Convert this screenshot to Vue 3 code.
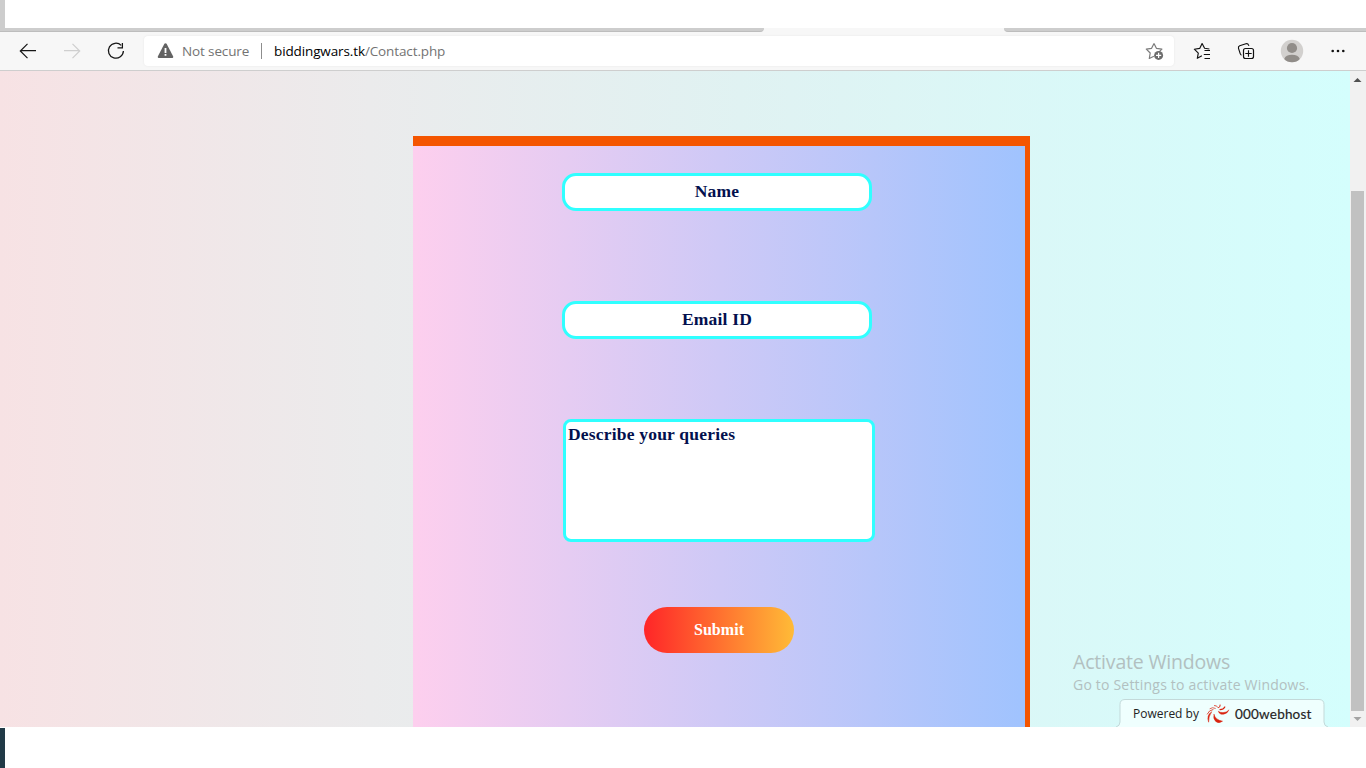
<script setup>
const fields = ['Name', 'Email ID']
</script>

<template>
  <div class="screen">
    <div class="topstrip"></div>
    <div class="tabs"><div class="tab left"></div><div class="tab right"></div></div>
    <header class="toolbar">
      <svg class="nav" width="144" height="38" viewBox="0 32 144 38" fill="none">
        <path d="M27.5 43.8 20.3 51l7.2 7.2M20.5 50.7H36" stroke="#161616" stroke-width="1.2" />
        <path d="m72.5 43.8 7.2 7.2-7.2 7.2M79.5 50.7H64" stroke="#cfcfcf" stroke-width="1.2" />
        <path d="M121.2 45.4A7.5 7.5 0 1 0 123.4 51M122.4 43v4.9h-4.9" stroke="#161616" stroke-width="1.25" />
      </svg>
      <div class="address">
        <svg class="warn" width="17" height="16" viewBox="0 0 17 16"><path d="M7.4.8Q8.5-.4 9.6.8L16.2 13.6Q16.5 15 15.3 15H1.7Q.5 15 .8 13.6Z" fill="#636363" /><path d="M7.6 5h1.8v5H7.6zM7.6 11h1.8v1.8H7.6z" fill="#fff" /></svg>
        <span class="secure">Not secure</span>
        <i class="bar"></i>
        <span class="url"><b>biddingwars.tk</b>/Contact.php</span>
      </div>
      <svg class="actions" width="236" height="38" viewBox="1130 32 236 38" fill="none" stroke-linejoin="round">
        <path d="m1154 43.5 2.4 4.8 5.5.8-3.8 3.8M1154 43.5l-2.4 4.8-5.3.8 3.9 3.9-.9 5.5 4.6-2.3" stroke="#7b7b7b" stroke-width="1.2" />
        <circle cx="1158.6" cy="55.4" r="4.5" fill="#6c6c6c" />
        <path d="M1156 55.4h5.2M1158.6 52.8V58" stroke="#fff" stroke-width="1.2" />
        <path d="m1209.4 49-4.8-.7-2.5-4.8-2.4 4.9-5.4.8 4 3.9-1 5.2 4.6-2.5M1204.5 50.5h5.500M1203.800 54.5h6.200M1204.500 58.5h5.500" stroke="#111" stroke-width="1.15" />
        <rect x="1243.5" y="48.5" width="10" height="10" rx="2" stroke="#111" stroke-width="1.2" />
        <path d="M1245.300 53.5h6.400M1248.500 50.300v6.400M1241.500 55.200q-1-.5-1.300-1.500l-1.700-5.400q-.5-1.800 1.200-2.500l6.200-2.100q2-.5 2.600 1.200l.4 1" stroke="#111" stroke-width="1.150" />
        <circle cx="1292" cy="51" r="11.2" fill="#d2d0ce" />
        <circle cx="1292" cy="48" r="5.1" fill="#918d89" />
        <path d="M1284.2 59q1.6-4.2 7.8-4.2t7.8 4.2q-3 3.200-7.800 3.200t-7.800-3.200Z" fill="#918d89" />
        <g fill="#111"><circle cx="1332.7" cy="51" r="1.3" /><circle cx="1338" cy="51" r="1.3" /><circle cx="1343.3" cy="51" r="1.3" /></g>
      </svg>
    </header>
    <main class="page">
      <form class="card">
        <div v-for="f in fields" :key="f" class="field"><span>{{ f }}</span></div>
        <div class="area"><span>Describe your queries</span></div>
        <div class="submit"><span>Submit</span></div>
      </form>
      <div class="scroll">
        <svg width="16" height="656" viewBox="0 0 16 656"><path d="m3.8 11-.3 0 4-4 4 4Z" fill="#505050" /><path fill="#c1c1c1" d="M1 120h13v520H1z" /><path d="m3.500 646 4 4 4-4Z" fill="#a3a3a3" /></svg>
      </div>
      <div class="activate"><div class="a1"><span>Activate Windows</span></div><div class="a2"><span>Go to Settings to activate Windows.</span></div></div>
      <div class="host">
        <svg class="plate" width="212" height="28" viewBox="0 0 212 28"><path d="M0 28q4-1 4-5V5.500q0-5 5-5h194q5 0 5 5V23q0 4 4 5" fill="#effffe" stroke="#c3d9d9" /></svg>
        <span class="powered">Powered by</span>
        <svg class="swirl" width="24" height="20" viewBox="0 0 24 20" fill="none" stroke="#d9230f" stroke-linecap="round">
          <path d="M22.800 6.200Q20.500 8.500 17 8.600 14 8.600 12.300 7.200 13.500 10.800 17.500 10.300 21.500 9.500 22.800 6.200Z" fill="#d9230f" stroke-width=".4" />
          <path d="M8 10.500Q9.500 16 16.500 17.200 13 20 9.800 17.500 7 14.800 8 10.500Z" fill="#d9230f" stroke-width=".5" />
          <path d="M5.500 8Q.2 11 2.600 18.200 2.400 12.500 5.500 8Z" fill="#d9230f" stroke-width=".5" />
          <path d="M7 5.500Q3 6 1.300 10" stroke-width=".8" />
          <path d="M9.300 4.300Q6.500 2.800 4 4.600" stroke-width=".7" />
          <path d="M11.600 3Q10.500 1.500 8.500 1.500" stroke-width=".8" />
          <path d="M12.500 3.700Q14.700 3 14.200 1" stroke-width="1" />
          <path d="M14 5.600Q17.500 5.500 18.800 3" stroke-width="1.200" />
        </svg>
        <span class="brand">000webhost</span>
      </div>
    </main>
    <footer class="bottom"></footer>
  </div>
</template>

<style>
body { margin: 0; overflow: hidden; background: #fff; }
</style>

<style scoped>
* { box-sizing: border-box; }
svg { display: block; }
span { white-space: nowrap; }
.screen { width: 1366px; height: 768px; display: flex; flex-direction: column; overflow: hidden; font-family: "Open Sans", "Noto Sans", sans-serif; }
.topstrip { height: 28px; border-left: 5px solid #cdcdcd; }
.tabs { height: 4px; display: flex; justify-content: space-between; background: #f7f7f7; }
.tab { background: #cdcdcd; border-bottom: 1px solid #bdbdbd; }
.left { width: 764px; border-bottom-right-radius: 4px; }
.right { width: 362px; border-bottom-left-radius: 4px; }
.toolbar { height: 39px; display: flex; background: #f7f7f7; border-bottom: 1px solid #cecece; position: relative; }
.address { width: 1030px; height: 30px; margin-top: 4px; display: flex; align-items: center; background: #fff; border-radius: 4px; box-shadow: 0 0 2px #e4e4e4; padding-left: 13px; font-size: 13.5px; color: #737373; }
.secure { margin-left: 8px; width: 79px; letter-spacing: -.13px; }
.bar { width: 1px; height: 16px; background: #8d8d8d; }
.url { margin-left: 12px; letter-spacing: -.12px; }
.url b { font-weight: 400; color: #000; }
.actions { position: absolute; right: 0; top: 0; }
.page { height: 656px; position: relative; display: flex; justify-content: space-between; background: linear-gradient(to right, #f7e2e4, #ebebec 370px, #e0f2f2 740px, #d4fefd 1350px); overflow: hidden; }
.card { width: 617px; height: 591px; margin: 65px 0 0 413px; padding: 27px 0 0 149px; border-top: 10px solid #f45500; border-right: 5px solid #f45500; background: linear-gradient(to right, #fdcfee, #a0c3fe) padding-box; font: bold 17.5px "Liberation Serif", serif; letter-spacing: .2px; color: #03104e; }
.field { width: 310px; height: 38px; margin-bottom: 90px; border: 3px solid #30ffff; border-radius: 14px; background: #fff; display: flex; align-items: center; justify-content: center; padding-bottom: 2px; }
.area { width: 312px; height: 123px; margin: -10px 0 0 1px; border: 3px solid #30ffff; border-radius: 8px; background: #fff; padding: 2px; line-height: 20px; }
.submit { width: 150px; height: 46px; margin: 65px 0 0 82px; border-radius: 23px; background: linear-gradient(to right, #ff2528, #ffbb37); color: #fff; font-size: 16px; letter-spacing: .05px; display: flex; align-items: center; justify-content: center; }
.scroll { width: 16px; background: #f1f1f1; }
.activate { position: absolute; left: 1073px; top: 577px; color: #b2c0c0; }
.a1 { font-size: 19.5px; line-height: 27px; letter-spacing: -.18px; }
.a2 { font-size: 14px; line-height: 18px; padding-top: 1px; letter-spacing: .2px; }
.host { position: absolute; left: 1116px; top: 628px; width: 212px; height: 28px; display: flex; align-items: center; padding: 1px 0 0 17px; color: #222; }
.plate { position: absolute; left: 0; top: 0; }
.host > span, .swirl { position: relative; }
.powered { width: 73px; font-size: 12px; }
.swirl { flex: none; }
.brand { margin-left: 5px; font: 13.5px Lato, sans-serif; letter-spacing: .2px; -webkit-text-stroke: .2px #333; }
.bottom { height: 40px; margin-top: 1px; border-left: 5px solid #213a47; }
</style>
